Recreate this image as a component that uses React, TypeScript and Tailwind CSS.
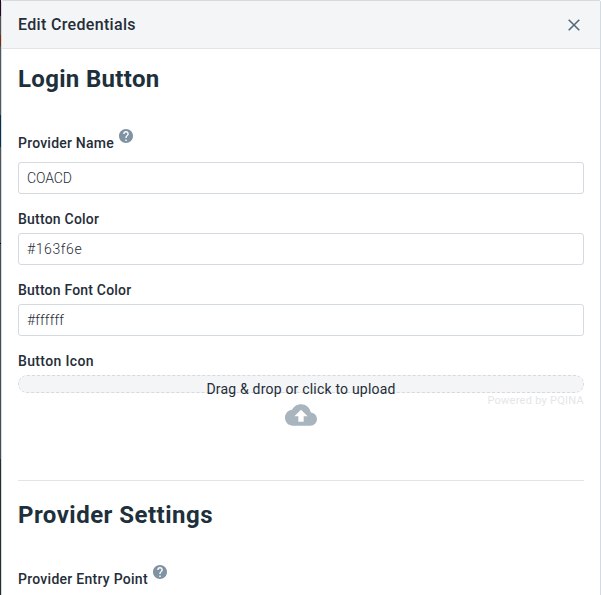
import type { ReactNode } from "react";

function HelpIcon() {
  return (
    <svg viewBox="2 2 20 20" className="mb-[10px] ml-[5px] h-[14px] w-[14px] shrink-0 fill-[#8093a2]">
      <path d="M12 2C6.48 2 2 6.48 2 12s4.48 10 10 10 10-4.48 10-10S17.52 2 12 2zm1 17h-2v-2h2v2zm2.07-7.75-.9.92C13.45 12.9 13 13.5 13 15h-2v-.5c0-1.1.45-2.1 1.17-2.83l1.24-1.26c.37-.36.59-.86.59-1.41 0-1.1-.9-2-2-2s-2 .9-2 2H8c0-2.21 1.79-4 4-4s4 1.79 4 4c0 .88-.36 1.68-.93 2.25z" />
    </svg>
  );
}

function Label({ children }: { children: ReactNode }) {
  return <div className="h-5 text-[14px] leading-5 font-medium whitespace-nowrap text-[#252d38]">{children}</div>;
}

function TextField({ value, spacing }: { value: string; spacing: string }) {
  return (
    <input
      defaultValue={value}
      className={`block h-8 w-full rounded-[3px] border border-[#d3dae0] bg-white px-2 text-[14px] font-light text-[#252d38] outline-none ${spacing}`}
    />
  );
}

export default function App() {
  return (
    <div className="flex h-[595px] w-[601px] overflow-hidden bg-white font-[Roboto,'Noto_Sans',sans-serif]">
      <div className="flex w-px shrink-0 flex-col bg-[#424447]">
        <div className="h-4 bg-[#260a24]" />
        <div className="h-[19px] bg-[#555255]" />
        <div className="h-[11px] bg-[#7b2d0b]" />
        <div className="h-[69px] bg-[#55585b]" />
        <div className="h-8 bg-[#06304f]" />
        <div className="h-[96px] bg-[#515456]" />
        <div className="h-px bg-black" />
        <div className="h-[215px] bg-[#494c4e]" />
        <div className="grow bg-[#292b2d]" />
      </div>
      <div className="flex h-[620px] w-[600px] flex-col rounded-t-[2px] border border-[#d3dae0] bg-white">
        <header className="flex h-12 shrink-0 items-center justify-between border-b border-[#e0e5e9] bg-[#f4f5f7] pr-5 pl-4">
          <h1 className="text-[16px] leading-6 font-medium tracking-[0.33px] text-[#252d38]">Edit Credentials</h1>
          <svg viewBox="0 0 12 12" className="h-3 w-3 fill-none stroke-[#526b7c] stroke-[1.6]">
            <path d="M.7.7 11.3 11.3M11.3.7.7 11.3" />
          </svg>
        </header>
        <main className="px-4 pt-[14px]">
          <h2 className="h-8 text-[24px] leading-8 font-bold tracking-[0.32px] text-[#1d303c]">Login Button</h2>
          <div className="mt-[34px] flex h-[33px] items-end">
            <div className="mb-[9px] flex items-end">
              <Label><span className="tracking-[0.22px]">Provider Name</span></Label>
              <HelpIcon />
            </div>
          </div>
          <TextField value="COACD" spacing="tracking-[-0.1px]" />
          <div className="mt-[15px] mb-1"><Label><span className="tracking-[0.22px]">Button Color</span></Label></div>
          <TextField value="#163f6e" spacing="tracking-[0.6px]" />
          <div className="mt-[15px] mb-1"><Label><span className="tracking-[0.2px]">Button Font Color</span></Label></div>
          <TextField value="#ffffff" spacing="tracking-[0.15px]" />
          <div className="mt-[15px] mb-1"><Label><span className="tracking-[0.35px]">Button Icon</span></Label></div>
          <div className="relative h-[18px] rounded-[9px] border border-dashed border-[#d3dae0] bg-[#f4f5f7]">
            <div className="absolute inset-x-0 top-[3px] text-center text-[14px] leading-5 tracking-[0.2px] text-[#252d38]">
              Drag &amp; drop or click to upload
            </div>
            <div className="absolute -right-px top-[18px] text-[11px] leading-[14px] tracking-[0.27px] whitespace-nowrap text-[#e4e6e8]">
              Powered by PQINA
            </div>
            <svg viewBox="0 4 24 16" className="absolute top-[28px] left-[266px] h-[22px] w-8 fill-[#a9b5be]">
              <path d="M19.35 10.04C18.67 6.59 15.64 4 12 4 9.11 4 6.6 5.64 5.35 8.04 2.34 8.36 0 10.91 0 14c0 3.31 2.69 6 6 6h13c2.76 0 5-2.24 5-5 0-2.64-2.05-4.78-4.65-4.96zM14 13v4h-4v-4H7l5-5 5 5h-3z" />
            </svg>
          </div>
          <hr className="mt-[87px] border-[#e2e5e7]" />
          <h2 className="mt-[18px] h-8 text-[24px] leading-8 font-bold tracking-[0.48px] text-[#1d303c]">Provider Settings</h2>
          <div className="mt-[34px] flex h-[33px] items-end">
            <div className="mb-[9px] flex items-end">
              <Label><span className="tracking-[0.27px]">Provider Entry Point</span></Label>
              <HelpIcon />
            </div>
          </div>
        </main>
      </div>
    </div>
  );
}
